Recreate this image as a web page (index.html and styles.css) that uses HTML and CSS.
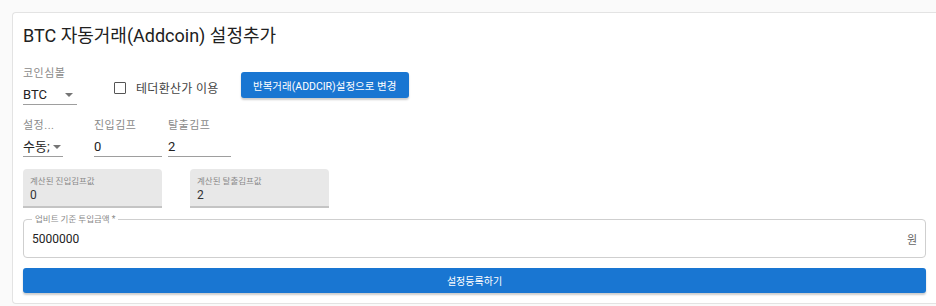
FILE: index.html
```html
<!DOCTYPE html>
<html lang="ko">
<head>
    <meta charset="UTF-8">
    <meta name="viewport" content="width=device-width, initial-scale=1.0">
    <link rel="stylesheet" href="styles.css">
</head>
<body>
    <div class="card">
        <h2 class="title">BTC 자동거래(Addcoin) 설정추가</h2>

        <div class="row row-top">
            <div class="field select-field coin">
                <span class="label">코인심볼</span>
                <div class="control">
                    <span class="value">BTC</span>
                    <span class="arrow"></span>
                </div>
            </div>
            <label class="check">
                <span class="box"></span>
                <span>테더환산가 이용</span>
            </label>
            <button class="btn small">반복거래(ADDCIR)설정으로 변경</button>
        </div>

        <div class="row row-mid">
            <div class="field select-field mode">
                <span class="label">설정...</span>
                <div class="control">
                    <span class="value">수동;</span>
                    <span class="arrow"></span>
                </div>
            </div>
            <div class="field entry">
                <span class="label">진입김프</span>
                <div class="control"><span class="value">0</span></div>
            </div>
            <div class="field exit">
                <span class="label">탈출김프</span>
                <div class="control"><span class="value">2</span></div>
            </div>
        </div>

        <div class="row row-filled">
            <div class="filled">
                <span class="filled-label">계산된 진입김프값</span>
                <span class="filled-value">0</span>
            </div>
            <div class="filled">
                <span class="filled-label">계산된 탈출김프값</span>
                <span class="filled-value">2</span>
            </div>
        </div>

        <fieldset class="outlined">
            <legend>업비트 기준 투입금액 *</legend>
            <span class="amount">5000000</span>
            <span class="unit">원</span>
        </fieldset>

        <button class="btn wide">설정등록하기</button>
    </div>
</body>
</html>
```

FILE: styles.css
```css
body {
    margin: 0;
    padding: 12px 0 0 12px;
    background-color: #fafafa;
    font-family: Roboto, "Noto Sans CJK KR", sans-serif;
    color: #212121;
}

.card {
    background-color: #fff;
    border: 1px solid #e3e3e3;
    border-right: none;
    border-radius: 4px 0 0 4px;
    padding: 0 10px 10px 10px;
}

.title {
    font-size: 18px;
    font-weight: 400;
    margin: 0;
    padding-top: 9px;
    height: 34px;
    line-height: 28px;
}

.row {
    display: flex;
    align-items: flex-start;
}

.row-top {
    height: 62px;
    padding-top: 10px;
    box-sizing: border-box;
}

/* underline fields */
.field {
    display: flex;
    flex-direction: column;
}

.label {
    font-size: 11px;
    color: #8a8a8a;
    line-height: 16px;
    height: 16px;
    letter-spacing: 0.5px;
}

.control {
    display: flex;
    align-items: center;
    height: 19px;
    margin-top: 3px;
    border-bottom: 1px solid #9e9e9e;
    position: relative;
}

.value {
    font-size: 13px;
    line-height: 18px;
    color: #222;
}

.arrow {
    position: absolute;
    right: 4px;
    top: 8px;
    width: 0;
    height: 0;
    border-left: 4px solid transparent;
    border-right: 4px solid transparent;
    border-top: 4px solid #757575;
}

.coin {
    width: 54px;
}

.check {
    display: flex;
    align-items: center;
    margin-left: 37px;
    margin-top: 13px;
    font-size: 12px;
    color: #444;
    letter-spacing: 0.3px;
}

.box {
    width: 10px;
    height: 10px;
    border: 1.5px solid #555;
    border-radius: 1px;
    margin-right: 10px;
}

.btn {
    background-color: #1976d2;
    color: #fff;
    border: none;
    border-radius: 3px;
    font-family: Roboto, "Noto Sans CJK KR", sans-serif;
    font-size: 10.5px;
    box-shadow: 0 2px 2px rgba(0, 0, 0, 0.2);
    cursor: pointer;
}

.btn.small {
    margin-left: 22px;
    margin-top: 6px;
    height: 26px;
    width: 168px;
    padding: 0;
}

.row-mid {
    height: 51px;
}

.mode {
    width: 40px;
}

.mode .arrow {
    right: 2px;
}

.entry {
    width: 68px;
    margin-left: 31px;
}

.exit {
    width: 63px;
    margin-left: 6px;
}

/* filled read-only boxes */
.row-filled {
    gap: 28px;
    height: 49px;
}

.filled {
    width: 139px;
    height: 39px;
    box-sizing: border-box;
    background-color: #e8e8e8;
    border-radius: 4px 4px 0 0;
    border-bottom: 2px solid #c4c4c4;
    padding: 6px 7px 0 7px;
    display: flex;
    flex-direction: column;
}

.filled-label {
    font-size: 8.5px;
    color: #8a8a8a;
    line-height: 12px;
}

.filled-value {
    font-size: 12px;
    line-height: 16px;
    color: #333;
}

/* outlined amount field */
.outlined {
    margin: -4px 0 0 0;
    padding: 0 8px 0 8px;
    height: 44px;
    box-sizing: border-box;
    border: 1px solid #cfcfcf;
    border-radius: 4px;
    display: flex;
    align-items: center;
    justify-content: space-between;
}

.outlined legend {
    font-size: 8.5px;
    color: #8a8a8a;
    padding: 0 3px;
    margin-left: 0;
    line-height: 10px;
}

.amount {
    font-size: 12px;
    color: #222;
    margin-top: -4px;
}

.unit {
    font-size: 11px;
    color: #666;
    margin-top: -4px;
}

.btn.wide {
    display: block;
    width: 100%;
    height: 25px;
    margin-top: 10px;
    font-size: 10px;
}
```
